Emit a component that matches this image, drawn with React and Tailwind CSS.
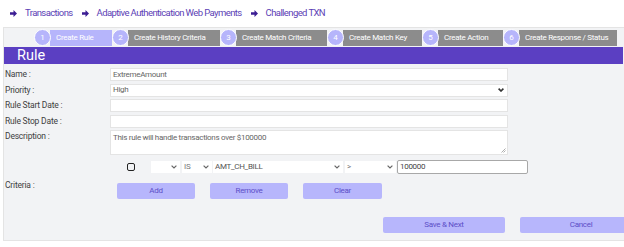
import React from "react";

function Arrow() {
    return (
        <svg width="7" height="7" viewBox="0 0 10 10" className="shrink-0">
            <path d="M0 3.3h5V0l5 5-5 5V6.7H0z" fill="#3c1e94" />
        </svg>
    );
}

function Chevron({ dark }) {
    return (
        <svg width="6" height="4" viewBox="0 0 6 4" className="shrink-0">
            <path d="M0.6 0.6L3 3l2.4-2.4" fill="none" stroke={dark ? "#333" : "#666"} strokeWidth={dark ? 1.6 : 1.2} />
        </svg>
    );
}

const steps = [
    { n: 1, label: "Create Rule", w: "w-[62px]", active: true },
    { n: 2, label: "Create History Criteria", w: "w-[92px]" },
    { n: 3, label: "Create Match Criteria", w: "w-[91px]" },
    { n: 4, label: "Create Match Key", w: "w-[79px]" },
    { n: 5, label: "Create Action", w: "w-[65px]" },
    { n: 6, label: "Create Response / Status", w: "w-[98px]" },
];

function Row({ label, children }) {
    return (
        <div className="flex items-start">
            <div className="w-[106px] pl-[1px] text-[8.5px] tracking-[-0.2px] leading-[13px] text-[#3f3f3f]">{label}</div>
            {children}
        </div>
    );
}

export default function App() {
    return (
        <div className="w-[624px] h-[247px] bg-white overflow-hidden font-['Roboto',sans-serif]">

            {/* breadcrumb */}
            <div className="h-[27px] flex items-center pl-[10px] text-[9.5px] tracking-[-0.6px] text-[#5b41b5]">
                <Arrow />
                <span className="ml-[8px]">Transactions</span>
                <span className="ml-[9px]"><Arrow /></span>
                <span className="ml-[8px]">Adaptive Authentication Web Payments</span>
                <span className="ml-[9px]"><Arrow /></span>
                <span className="ml-[8px]">Challenged TXN</span>
            </div>

            <div className="ml-[3px] w-[640px] bg-[#f2f3f5] border border-[#e4e4e4] pb-[7px]">

                {/* steps */}
                <div className="h-[19px] flex items-center pl-[30px]">
                    {steps.map((s) => (
                        <div key={s.n} className="flex items-center">
                            <div className="relative z-10 w-[17px] h-[17px] -mr-[1px] rounded-full bg-[#b6b5fb] border-[1.5px] border-white flex items-center justify-center text-white text-[8px]">
                                {s.n}
                            </div>
                            <div className={`${s.w} h-[16px] flex items-center pl-[6px] text-white text-[8px] tracking-[-0.3px] whitespace-nowrap ${s.active ? "bg-[#b6b5fb]" : "bg-[#8c8c8c]"}`}>
                                {s.label}
                            </div>
                        </div>
                    ))}
                </div>

                {/* header */}
                <div className="h-[17px] mr-[19px] bg-[#5b3fc2] text-white text-[14.5px] leading-[17px] pl-[13px]">Rule</div>

                {/* form */}
                <div className="mt-[4px] flex flex-col gap-[2.5px] text-[8px] tracking-[-0.3px] text-[#666]">
                    <Row label="Name :">
                        <div className="w-[398px] h-[13px] bg-white border border-[#e4e4e4] flex items-center pl-[2px]">ExtremeAmount</div>
                    </Row>
                    <Row label="Priority :">
                        <div className="w-[398px] h-[13px] bg-white border border-[#e4e4e4] flex items-center justify-between pl-[2px] pr-[3px]">
                            <span>High</span>
                            <Chevron dark />
                        </div>
                    </Row>
                    <Row label="Rule Start Date :">
                        <div className="w-[398px] h-[13px] bg-white border border-[#e4e4e4]" />
                    </Row>
                    <Row label="Rule Stop Date :">
                        <div className="w-[398px] h-[13px] bg-white border border-[#e4e4e4]" />
                    </Row>
                    <Row label="Description :">
                        <div className="relative w-[398px] h-[25px] bg-white border border-[#e4e4e4] pl-[2px] pt-[1px] leading-[11px]">
                            This rule will handle transactions over $100000
                            <svg width="5" height="5" viewBox="0 0 5 5" className="absolute right-[1px] bottom-[1px]">
                                <path d="M0.5 4.5L4.5 0.5M2.5 4.5L4.5 2.5" stroke="#999" strokeWidth="0.8" />
                            </svg>
                        </div>
                    </Row>
                </div>

                {/* criteria */}
                <div className="mt-[5px] flex items-start">
                    <div className="w-[106px] pl-[1px] pt-[19px] text-[8.5px] tracking-[-0.2px] leading-[13px] text-[#3f3f3f]">Criteria :</div>
                    <div className="flex flex-col">
                        <div className="flex items-center h-[14px] text-[8px] tracking-[-0.3px] text-[#777]">
                            <div className="ml-[17px] w-[8px] h-[8px] border-[1.5px] border-[#222] rounded-[2px]" />
                            <div className="ml-[16px] w-[29px] h-[12px] bg-white flex items-center justify-end pr-[3px]">
                                <Chevron />
                            </div>
                            <div className="ml-[2px] w-[30px] h-[12px] bg-white flex items-center justify-between pl-[2px] pr-[3px]">
                                <span>IS</span>
                                <Chevron />
                            </div>
                            <div className="ml-[1px] w-[130px] h-[12px] bg-white flex items-center justify-between pl-[2px] pr-[3px] text-[#555]">
                                <span>AMT_CH_BILL</span>
                                <Chevron />
                            </div>
                            <div className="ml-[2px] w-[51px] h-[12px] bg-white flex items-center justify-between pl-[2px] pr-[3px]">
                                <span>&gt;</span>
                                <Chevron />
                            </div>
                            <div className="ml-[1px] w-[131px] h-[14px] bg-white border border-[#a8a8a8] rounded-[2px] flex items-center pl-[2px] text-[#444]">
                                100000
                            </div>
                        </div>

                        <div className="mt-[9px] flex gap-[15px] ml-[7px] text-[8px] tracking-[-0.3px] text-[#5d4fc8]">
                            <button className="w-[78px] h-[16px] bg-[#b7b6fc] rounded-[2px]">Add</button>
                            <button className="w-[78px] h-[16px] bg-[#b7b6fc] rounded-[2px]">Remove</button>
                            <button className="w-[79px] h-[16px] bg-[#b7b6fc] rounded-[2px]">Clear</button>
                        </div>
                    </div>
                </div>

                <div className="mt-[18px] ml-[379px] flex gap-[15px] text-[8px] tracking-[-0.3px] text-[#5d4fc8]">
                    <button className="w-[133px] h-[16px] bg-[#b7b6fc] rounded-[2px]">Save &amp; Next</button>
                    <button className="w-[133px] h-[16px] bg-[#b7b6fc] rounded-[2px]">Cancel</button>
                </div>
            </div>
        </div>
    );
}
